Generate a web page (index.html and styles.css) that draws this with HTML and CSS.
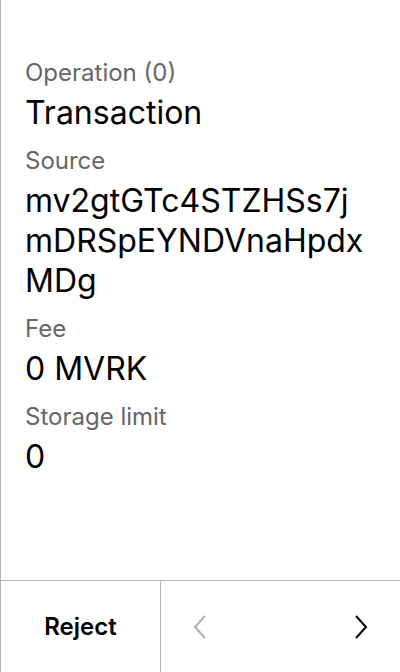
FILE: index.html
```html
<!DOCTYPE html>
<html>
<head>
<meta charset="utf-8">
<link rel="stylesheet" href="styles.css">
</head>
<body>
<div class="screen">
  <main class="content">
    <div class="field">
      <div class="label">Operation (0)</div>
      <div class="value">Transaction</div>
    </div>
    <div class="field">
      <div class="label">Source</div>
      <div class="value address">mv2gtGTc4STZHSs7jmDRSpEYNDVnaHpdxMDg</div>
    </div>
    <div class="field">
      <div class="label">Fee</div>
      <div class="value">0 MVRK</div>
    </div>
    <div class="field">
      <div class="label">Storage limit</div>
      <div class="value">0</div>
    </div>
  </main>
  <footer class="footer">
    <button class="reject">Reject</button>
    <div class="nav">
      <svg class="chev prev" width="14" height="26" viewBox="0 0 14 26"><path d="M12 2 L2 13 L12 24" fill="none" stroke="currentColor" stroke-width="2"/></svg>
      <svg class="chev next" width="14" height="26" viewBox="0 0 14 26"><path d="M2 2 L12 13 L2 24" fill="none" stroke="currentColor" stroke-width="2"/></svg>
    </div>
  </footer>
</div>
</body>
</html>
```
FILE: styles.css
```css
html, body {
  margin: 0;
  padding: 0;
  background: #fff;
}
body {
  font-family: Inter, "Noto Sans", sans-serif;
  color: #000;
}
.screen {
  width: 400px;
  height: 672px;
  box-sizing: border-box;
  border-left: 1px solid #b3b3b3;
  display: flex;
  flex-direction: column;
}
.content {
  flex: 1;
  padding: 58px 24px 0 24px;
  display: flex;
  flex-direction: column;
  gap: 13px;
}
.field {
  display: flex;
  flex-direction: column;
  gap: 6px;
}
.label {
  font-size: 24px;
  line-height: 29px;
  color: #666;
}
.value {
  font-size: 32px;
  line-height: 40px;
  color: #000;
}
.address {
  word-break: break-all;
}
.footer {
  height: 92px;
  border-top: 1px solid #b3b3b3;
  display: flex;
  box-sizing: border-box;
}
.reject {
  width: 160px;
  border: none;
  border-right: 1px solid #b3b3b3;
  background: #fff;
  font-family: Inter, "Noto Sans", sans-serif;
  font-size: 24px;
  font-weight: 600;
  color: #000;
  padding: 0;
}
.nav {
  flex: 1;
  display: flex;
  align-items: center;
  justify-content: space-between;
  padding: 0 32px;
}
.chev.prev {
  color: #b0b0b0;
}
.chev.next {
  color: #000;
}
```
